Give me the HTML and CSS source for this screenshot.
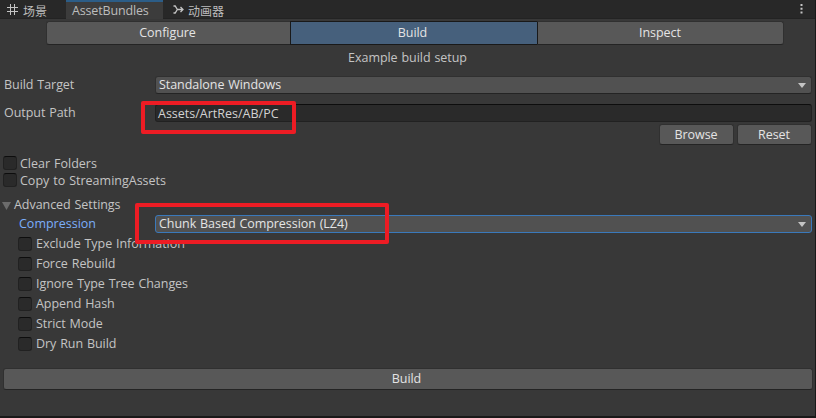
FILE: index.html
```html
<!DOCTYPE html>
<html lang="zh">
<head>
<meta charset="utf-8">
<title>AssetBundles</title>
<link rel="stylesheet" href="styles.css">
</head>
<body>
<div class="window">
  <header class="tabs">
    <div class="tab scene"><svg width="11" height="11" viewBox="0 0 11 11"><path d="M3.5 0v11M7.5 0v11M0 3.500h11M0 7.500h11"/></svg><span class="cjk">场景</span></div>
    <div class="tab active"><span>AssetBundles</span></div>
    <div class="tab animator"><svg width="11" height="9" viewBox="0 0 11 9"><path d="M.5 1h1.700L4.300 4.500 2.200 8H.5M4.300 4.500h5.700M7.500 2l2.500 2.500L7.500 7"/></svg><span class="cjk">动画器</span></div>
    <svg class="more" width="3" height="11" viewBox="0 0 3 11"><path d="M.5 1h2v2h-2zM.5 4.700h2v2h-2zM.5 8.400h2v2h-2z"/></svg>
  </header>
  <nav class="modes">
    <button class="mode">Configure</button>
    <button class="mode on">Build</button>
    <button class="mode">Inspect</button>
  </nav>
  <main class="form">
    <div class="caption">Example build setup</div>
    <div class="row target"><label>Build Target</label><div class="select">Standalone Windows<i class="arrow"></i></div></div>
    <div class="row output"><label>Output Path</label><div class="input">Assets/ArtRes/AB/PC</div></div>
    <div class="actions"><button>Browse</button><button>Reset</button></div>
    <div class="checks">
      <div class="check"><i class="box"></i><span>Clear Folders</span></div>
      <div class="check"><i class="box"></i><span>Copy to StreamingAssets</span></div>
    </div>
    <div class="foldout"><i class="triangle"></i><span>Advanced Settings</span></div>
    <div class="row compression"><label>Compression</label><div class="select focus">Chunk Based Compression (LZ4)<i class="arrow"></i></div></div>
    <div class="options">
      <div class="check"><i class="box"></i><span>Exclude Type Information</span></div>
      <div class="check"><i class="box"></i><span>Force Rebuild</span></div>
      <div class="check"><i class="box"></i><span>Ignore Type Tree Changes</span></div>
      <div class="check"><i class="box"></i><span>Append Hash</span></div>
      <div class="check"><i class="box"></i><span>Strict Mode</span></div>
      <div class="check"><i class="box"></i><span>Dry Run Build</span></div>
    </div>
    <button class="build">Build</button>
  </main>
  <div class="mark mark-path"></div>
  <div class="mark mark-compression"></div>
</div>
</body>
</html>
```
FILE: styles.css
```css
* { box-sizing: border-box; }
body { margin: 0; background: #383838; }
.window {
  position: relative;
  width: 816px;
  height: 418px;
  overflow: hidden;
  background: #383838;
  border-right: 1px solid #191919;
  border-bottom: 2px solid #191919;
  color: #c4c4c4;
  font: 12.5px/16px "Open Sans", "Noto Sans CJK SC", sans-serif;
  letter-spacing: -.05px;
  word-spacing: .7px;
  white-space: nowrap;
}
.tabs {
  display: flex;
  align-items: stretch;
  height: 19px;
  background: #282828;
  border-bottom: 1px solid #232323;
  color: #bdbdbd;
}
.tab { display: flex; align-items: center; height: 19px; }
.tab svg { fill: none; stroke: #c4c4c4; stroke-width: 1; }
.animator svg { stroke-width: 1.3; }
.scene { width: 66px; padding-left: 7px; gap: 5px; }
.active { width: 97px; padding: 1px 0 0 6px; background: #3c3c3c; border-top: 2px solid #2c5d87; letter-spacing: -.15px; }
.animator { padding-left: 10px; gap: 4px; }
.cjk { font-family: "Noto Sans CJK SC", sans-serif; font-size: 12px; letter-spacing: 0; padding-top: 3px; }
.more { margin: 3px 12px 0 auto; fill: #c4c4c4; }
button {
  display: block;
  padding: 0;
  border: 1px solid #303030;
  border-bottom-color: #242424;
  border-radius: 3px;
  background: #585858;
  color: #e4e4e4;
  font: inherit;
  letter-spacing: inherit;
  text-align: center;
}
.modes { display: flex; margin: 2px 0 0 46px; width: 738px; height: 24px; }
.mode { flex: 1; border-radius: 0; border-right-width: 0; padding-right: 2px; }
.mode:first-child { flex: 0 0 244px; border-radius: 3px 0 0 3px; }
.mode.on { flex: 0 0 247px; background: #46607c; border-color: #191919; padding-right: 3px; }
.mode:last-child { border-radius: 0 3px 3px 0; border-right-width: 1px; border-left-color: #191919; padding-right: 1px; }
.caption { height: 31px; padding-top: 5px; text-align: center; }
.row { display: flex; height: 18px; }
.row label { width: 155px; padding-left: 4px; line-height: 17px; }
.select, .input {
  position: relative;
  width: 657px;
  border: 1px solid #303030;
  border-bottom-color: #242424;
  border-radius: 3px;
  background: #515151;
  padding-left: 3px;
  line-height: 15px;
  color: #e4e4e4;
}
.input { background: #2a2a2a; border-color: #212121; border-top-color: #0d0d0d; padding-left: 2px; line-height: 17px; color: #d2d2d2; letter-spacing: 0; }
.arrow { position: absolute; right: 5px; top: 6px; width: 8px; height: 5px; background: #c4c4c4; clip-path: polygon(0 0, 100% 0, 50% 100%); }
.output { margin-top: 10px; }
.actions { display: flex; justify-content: flex-end; gap: 3px; padding: 2px 3px 0 0; }
.actions button { width: 75px; height: 21px; line-height: 18px; padding-right: 1px; }
.checks { margin-top: 11px; }
.check { display: flex; gap: 3px; height: 17px; }
.checks .check { padding-left: 3px; letter-spacing: 0; }
.box { width: 14px; height: 14px; flex: none; background: #2a2a2a; border: 1px solid #212121; border-top-color: #0d0d0d; border-radius: 3px; }
.foldout { display: flex; height: 25px; padding: 7px 0 0 2px; gap: 3px; }
.triangle { width: 9px; height: 8px; margin-top: 5px; background: #6c6c6c; clip-path: polygon(0 0, 100% 0, 50% 100%); }
.compression label { padding-left: 19px; color: #7baefa; letter-spacing: 0; }
.select.focus { border-color: #3a79bb; }
.options { padding: 4px 0 0 18px; }
.options .check { height: 20px; gap: 4px; }
.options .check span { line-height: 14px; }
.build { width: 810px; height: 22px; margin: 11px 0 0 3px; line-height: 18px; padding-right: 3px; }
.mark { position: absolute; border: 4px solid #ed1c24; border-radius: 2px; }
.mark-path { left: 141px; top: 101px; width: 155px; height: 33px; }
.mark-compression { left: 135px; top: 203px; width: 254px; height: 41px; }
```
